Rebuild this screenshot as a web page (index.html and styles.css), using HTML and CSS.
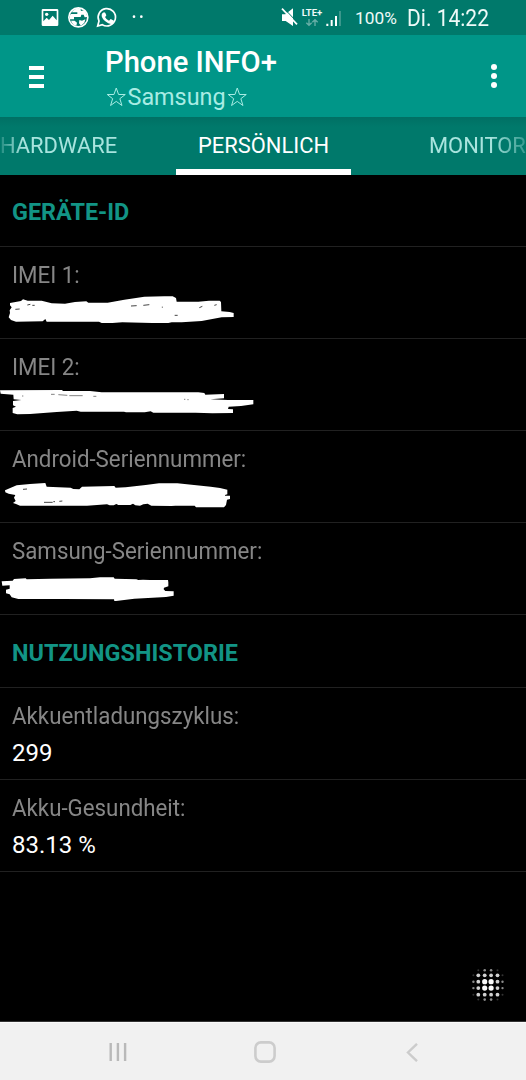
FILE: index.html
```html
<!DOCTYPE html>
<html lang="de">
<head>
<meta charset="utf-8">
<title>Phone INFO+</title>
<link rel="stylesheet" href="styles.css">
</head>
<body>
<div class="screen">
  <div class="status">
    <svg class="status-left" width="110" height="35" viewBox="0 0 330 105">
      <path fill="#fff" fill-rule="evenodd" d="M9 27h42q4 0 4 4v43q0 4-4 4H9q-4 0-4-4V31q0-4 4-4zM10 33v31l10-11 7 7 11-13 12 14V33z"/>
      <circle cx="20" cy="43" r="5" fill="#fff"/>
      <circle cx="115" cy="52" r="28.500" fill="none" stroke="#fff" stroke-width="5"/>
      <path fill="#fff" d="M95 37q10-13 26-12l2 8 10-2q8 8 9 20l-8 1-3-8h-7l-2 7h-20v7H89q-2-9 3-16h20v-5zM93 62h11l7 6-2 9q-11-2-16-15zM118 60l8 2 10-4-3 10-10 9-6-7z"/>
      <path fill="none" stroke="#fff" stroke-width="5" d="M173 78l4-15a26 26 0 1 1 10 11z"/>
      <path fill="#fff" d="M189 38q4-3 7 1l3 7q-1 4-4 5 4 8 12 11l5-5 10 5q1 7-5 9-9 3-21-7-12-10-11-20 1-4 4-6z"/>
      <circle cx="282" cy="50" r="4" fill="#fff"/><circle cx="304" cy="50" r="4" fill="#fff"/>
    </svg>
    <div class="status-right">
      <svg class="mute" width="18" height="20" viewBox="0 0 54 60">
        <path fill="#fff" d="M3 22h10l23-18v53L14 42H3z"/>
        <path stroke="#00796b" stroke-width="3" d="M7 2l44 46"/>
        <path stroke="#fff" stroke-width="5" d="M3 5l45 47"/>
      </svg>
      <div class="lte"><span>LTE+</span>
        <svg width="14" height="9" viewBox="0 0 42 27"><path fill="none" stroke="#67aea6" stroke-width="4" d="M12 3v18M4 14l8 8 8-8M30 24V6M22 13l8-8 8 8"/></svg>
      </div>
      <svg class="signal" width="16" height="18" viewBox="0 0 48 54"><path fill="#fff" d="M1 44h6v7H1zM14 33h6v18h-6zM27 21h6v30h-6z"/><path fill="#5aa79e" d="M40 6h4v45h-4z"/></svg>
      <span class="battery">100%</span>
      <span class="clock">Di. 14:22</span>
    </div>
  </div>
  <header class="appbar">
    <div class="menu"><i></i><i></i><i></i></div>
    <div class="titles">
      <div class="title">Phone INFO+</div>
      <div class="subtitle"><svg class="star" viewBox="0 0 22 22"><path d="M11 2l2.300 6.500H20l-5.400 4.200 2.100 6.800L11 15.400l-5.700 4.100 2.100-6.800L2 8.500h6.700z"/></svg><span>Samsung</span><svg class="star" viewBox="0 0 22 22"><path d="M11 2l2.300 6.500H20l-5.400 4.200 2.100 6.800L11 15.400l-5.700 4.100 2.100-6.800L2 8.500h6.700z"/></svg></div>
    </div>
    <div class="more"><i></i><i></i><i></i></div>
  </header>
  <nav class="tabs">
    <div class="tab tab-prev"><span>HARDWARE</span></div>
    <div class="tab tab-active"><span>PERSÖNLICH</span></div>
    <div class="tab tab-next"><span>MONITOR</span></div>
  </nav>
  <main class="content">
    <h2 class="section">GERÄTE-ID</h2>
    <div class="row"><div class="label">IMEI 1:</div>
      <svg class="scribble" viewBox="0 87 810 147"><path fill="#fff" d="M30 129l33-6 6-5 14 4h42l30 8 40 1 30-5 34-2 6 4h58l50-9 60-9 60-1h25l10 5 2 11h65l32-3h32l4 4 1 28 25 2 12 3v12l-36 1-60 11-60 4h-30l-10 2h-48l-90-2-30 2h-32l-8-4H140l-4-8-8 7-80 1-15-5-7-8 4-13-1-8 6-9-5-6z"/><path fill="none" stroke="#444" stroke-width="3" d="M46 148l13-1M82 135l9-2M97 136h7M393 138l17-1M430 136l18-2M524 166h9M598 143l9-4M643 136l7-2M487 140v3"/></svg></div>
    <div class="row"><div class="label">IMEI 2:</div>
      <svg class="scribble" viewBox="0 93 810 147"><path fill="#fff" d="M0 121l185-1 5 3h80l35 4h290l18 2 3 5 56-2v13l-41 3 53 2h76v13l-37 5-37 2-2 7 15 1v11l-62 1-50-2H460l-8-4-18 3H378l-6-2H242l-12-3-60 4-80 6-38 1-14-4v-15l10-4-9-4v-13l25-3-23-2-1-14-38-3z"/><path fill="none" stroke="#444" stroke-width="2" d="M153 133h11M175 134l27 2M208 137h40M280 139h9M552 148h4M562 149h4M66 138h4"/></svg></div>
    <div class="row"><div class="label">Android-Seriennummer:</div>
      <svg class="scribble" viewBox="0 84 810 147"><path fill="#fff" d="M15 136l35-15 40-4 46-3 4 11 72 3 8 4 18 1 8-8 97-2 4 5 30-1 60-7 40-5h55l100 10 28 4 22 5v14l-7 2v2h15v10l-9 2-3 16-6 7h-84l-4-5h-58l-12 1-60-1-11-6-13 2-10 4-14-1-7-5-8 4h-36l-6-3-8 4h-12l-8-3-60 4H60l-12-5-9-3 8-6-5-10 4-8-20-4-10-4z"/><path fill="none" stroke="#444" stroke-width="3" d="M69 133l12-1M132 172h26M160 170h5M178 169l9-1"/></svg></div>
    <div class="row"><div class="label">Samsung-Seriennummer:</div>
      <svg class="scribble" viewBox="0 90 810 147"><path fill="#fff" d="M5 139l33-2 4-5 35-2 3 3 70-2 120-1 30-3h41l3 4 65 2 6 2 14-1 20 1h55l1 7v12l-13 4-1 5 5 5 25 1v13l-23 4-95 5-55 7h-5l-1-5-150-1H55l-20-5-6-9-11-3v-11l11-3v-10l-22 1z"/></svg></div>
    <h2 class="section section-second">NUTZUNGSHISTORIE</h2>
    <div class="row"><div class="label">Akkuentladungszyklus:</div><div class="value">299</div></div>
    <div class="row"><div class="label">Akku-Gesundheit:</div><div class="value">83.13 %</div></div>
    <svg class="dots" width="36" height="36" viewBox="0 0 36 36" fill="#fff">
      <g opacity=".98"><circle cx="14.700" cy="14.700" r="2.600"/><circle cx="21.100" cy="14.700" r="2.600"/><circle cx="14.700" cy="21.100" r="2.600"/><circle cx="21.100" cy="21.100" r="2.600"/></g>
      <g opacity=".82"><circle cx="8.300" cy="8.300" r="1.900"/><circle cx="14.700" cy="8.300" r="1.900"/><circle cx="21.100" cy="8.300" r="1.900"/><circle cx="27.500" cy="8.300" r="1.900"/><circle cx="8.300" cy="14.700" r="1.900"/><circle cx="27.500" cy="14.700" r="1.900"/><circle cx="8.300" cy="21.100" r="1.900"/><circle cx="27.500" cy="21.100" r="1.900"/><circle cx="8.300" cy="27.700" r="1.900"/><circle cx="14.700" cy="27.700" r="1.900"/><circle cx="21.100" cy="27.700" r="1.900"/><circle cx="27.500" cy="27.700" r="1.900"/></g>
      <g opacity=".55"><circle cx="14.700" cy="3.300" r="1.300"/><circle cx="21.100" cy="3.300" r="1.300"/><circle cx="14.700" cy="32.600" r="1.300"/><circle cx="21.100" cy="32.600" r="1.300"/><circle cx="3.400" cy="14.700" r="1.200"/><circle cx="3.400" cy="21.100" r="1.200"/><circle cx="32.500" cy="14.700" r="1.200"/><circle cx="32.500" cy="21.100" r="1.200"/></g>
      <g opacity=".2"><circle cx="8.300" cy="3.300" r="1"/><circle cx="27.500" cy="3.300" r="1"/><circle cx="3.400" cy="8.300" r="1"/><circle cx="32.500" cy="8.300" r="1"/><circle cx="3.400" cy="27.700" r="1"/><circle cx="32.500" cy="27.700" r="1"/><circle cx="8.300" cy="32.600" r="1"/><circle cx="27.500" cy="32.600" r="1"/></g>
    </svg>
  </main>
  <footer class="navbar">
    <svg width="18" height="18" viewBox="0 0 18 18"><path stroke="#b9b9b9" stroke-width="2.400" d="M1.700 0v18M8.900 0v18M16.100 0v18"/></svg>
    <svg class="home" width="22" height="22" viewBox="0 0 22 22"><rect x="1.400" y="1.400" width="19.200" height="19.200" rx="5.500" fill="none" stroke="#ccc" stroke-width="2.600"/></svg>
    <svg width="12" height="19" viewBox="0 0 12 19"><path fill="none" stroke="#ccc" stroke-width="2.400" d="M11 .8L2 9.500l9 8.700"/></svg>
  </footer>
</div>
</body>
</html>
```
FILE: styles.css
```css
* { box-sizing: border-box; }
body { margin: 0; background: #000; font-family: Roboto, sans-serif; }
svg { display: block; flex: none; }
.screen { width: 526px; height: 1080px; display: flex; flex-direction: column; overflow: hidden; white-space: nowrap; }
.status { height: 35px; flex: none; background: #00796b; display: flex; justify-content: space-between; padding: 0 37px 0 40px; color: #eefaf8; }
.status-right { display: flex; align-items: center; }
.mute { margin-right: 2px; margin-top: -2px; }
.lte { width: 22px; display: flex; flex-direction: column; align-items: center; margin-right: 3px; }
.lte span { font-size: 9.500px; line-height: 10px; font-weight: 700; }
.signal { margin-right: 13px; }
.battery { font-size: 17.300px; width: 42px; margin-right: 10px; }
.clock { font-size: 24px; width: 82px; transform: scaleX(.875); transform-origin: left; }
.appbar { height: 82px; flex: none; background: #009688; display: flex; padding: 0 29px 0 29px; align-items: center; }
.menu { width: 15px; display: flex; flex-direction: column; gap: 5px; margin-top: 2px; }
.menu i { height: 4px; background: #fff; }
.titles { margin-left: 61px; flex: 1; padding-top: 3px; }
.title { color: #fff; font-size: 29.200px; line-height: 34px; font-weight: 500; }
.subtitle { color: #a8ece4; font-size: 23.400px; line-height: 28px; display: flex; align-items: center; margin-top: 4px; }
.star { width: 22.500px; height: 22px; fill: none; stroke: #a8ece4; stroke-width: 1; }
.more { display: flex; flex-direction: column; gap: 3px; }
.more i { width: 6px; height: 6px; border-radius: 50%; background: #fff; }
.tabs { height: 58px; flex: none; background: linear-gradient(#007064, #00796b 10px); display: grid; grid-template-columns: 176px 175px 175px; grid-template-rows: 58px; font-size: 21.900px; line-height: 58px; color: #a8e4de; }
.tab-active { color: #fff; text-align: center; height: 58px; border-bottom: 6px solid #fff; }
.tab-prev span { -webkit-mask-image: linear-gradient(90deg, rgba(0,0,0,.2), #000 22px); }
.tab-next { padding-left: 78px; }
.tab-next span { -webkit-mask-image: linear-gradient(90deg, #000 62px, rgba(0,0,0,.3) 97px); }
.content { flex: 1; display: flex; flex-direction: column; border-bottom: 1px solid #333; }
.section { height: 72px; margin: 0; padding: 0 12px; border-bottom: 1px solid #212121; color: #129485; font-size: 23.400px; line-height: 74px; font-weight: 700; }
.section-second { height: 73px; line-height: 76px; }
.row { height: 92px; padding: 14px 12px 0; border-bottom: 1px solid #212121; }
.label { color: #868686; font-size: 23.400px; line-height: 28px; transform: scaleX(.953); transform-origin: left; }
.value { color: #fff; font-size: 24px; line-height: 28px; margin-top: 9px; }
.scribble { width: 270px; height: 49px; margin-left: -12px; }
.dots { align-self: flex-end; margin: auto 20px 18px 0; }
.navbar { height: 58px; flex: none; background: #f1f1f1; border-top: 1px solid #fafafa; display: flex; align-items: center; justify-content: space-between; padding: 1px 108px 0 109px; }
.home { margin-right: 4px; }
```
